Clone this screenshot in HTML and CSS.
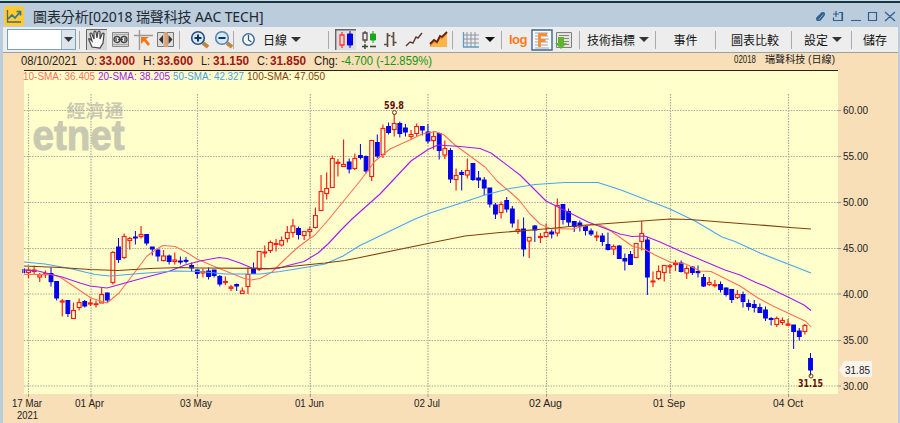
FILE: index.html
```
<!DOCTYPE html>
<html lang="zh-Hant">
<head>
<meta charset="utf-8">
<title>圖表分析</title>
<link rel="stylesheet" href="styles.css">
</head>
<body>
<div class="window">
  <header class="titlebar">
    <svg class="app-icon" width="20" height="20" viewBox="0 0 20 20"><rect width="20" height="20" rx="3" fill="#fdcb35"/><path d="M3.5 4v12H17" fill="none" stroke="#56666a" stroke-width="1.3"/><path d="M4 13l4-4 3 3 5-6M12.500 5.500H16.500V9.500" fill="none" stroke="#33758a" stroke-width="1.7"/></svg>
    <h1>圖表分析[02018 瑞聲科技 AAC TECH]</h1>
    <svg class="window-controls" width="84" height="16" viewBox="812 8 84 16"><g fill="none" stroke="#2d608e" stroke-width="1.2"><path d="M818 18l4-5q3-1 2 2l-4 5q-4 1-3-2l4-4M818 19l5-6" stroke-width="1.6"/><path d="M839 12.500h3.500v8h-9v-3M836 11v6M833 14h6M842 12.500v8"/><path d="M851 20.500h10M868.500 12.500h8v8h-8zM885 12l10 9M895 12l-10 9"/></g></svg>
  </header>

  <nav class="toolbar">
    <div class="section symbol"><div class="combo"><i></i><b><svg width="12" height="8" viewBox="0 0 12 8"><path d="M1 1h9L5.500 6z" fill="#333"/></svg></b></div></div>
    <div class="section cursor-tools">
      <svg viewBox="0 0 22 22"><path d="M0 0h21v21H0z" fill="#d7d7d7"/><path d="M.5 21V.5H21" fill="none" stroke="#666"/><path d="M6 18L3 11q-1-2 1-1l2 2-2-7q1-2 2 0l2 5V3q1-2 2 0l1 6 1-6q1-2 2 0v7l2-5q2-2 2 0l-1 9-3 5z" fill="#fafafa" stroke="#444" stroke-width="1.200"/></svg>
      <svg viewBox="0 0 22 22"><path d="M2.500 3.500h16v14h-16z" fill="#d8d8d8" stroke="#888"/><path d="M3 5.500h15M3 15.500h15" stroke="#aaa"/><g fill="#eee" stroke="#444" stroke-width="1.300"><circle cx="7" cy="10.500" r="3"/><circle cx="14" cy="10.500" r="3"/><path d="M8 10.500h5M6 9v3M15 9v3"/></g></svg>
      <svg viewBox="0 0 22 22"><path d="M1 6.500h19M6.500 1v20" stroke="#999" stroke-width="1.400"/><path d="M8 8h8l-3 2 4 5-2 2-4-5-3 3z" fill="#ff7410"/></svg>
      <svg viewBox="0 0 22 22"><path d="M2.500 3.500h16v14h-16z" fill="#ddd" stroke="#777"/><path d="M9.500 3h2.500v15h-2.500z" fill="#ff9a4a"/><path d="M8 6v9l-4-4.500zM13.500 6v9l4-4.500z" fill="#333"/><path d="M9 4v14M12.500 4v14" stroke="#aaa"/></svg>
    </div>
    <div class="section zoom-tools">
      <svg viewBox="0 0 22 22"><path d="M14 14l5 4" stroke="#c1853d" stroke-width="4"/><circle cx="9" cy="9" r="6.300" fill="#d3e9fa" stroke="#284f7d" stroke-width="1.600"/><path d="M5.500 9h7M9 5.500v7" stroke="#17345f" stroke-width="2"/></svg>
      <svg viewBox="0 0 22 22"><path d="M14 14l5 4" stroke="#c1853d" stroke-width="4"/><circle cx="9" cy="9" r="6.300" fill="#d3e9fa" stroke="#5484ad" stroke-width="1.600"/><path d="M5.500 9h7" stroke="#17345f" stroke-width="2"/></svg>
    </div>
    <div class="section period"><svg width="16" height="16" viewBox="0 0 16 16"><circle cx="7.500" cy="7.500" r="5.700" fill="#f8fbff" stroke="#3d6c9f" stroke-width="1.500"/><path d="M7.500 3v5l3 2" fill="none" stroke="#31577f" stroke-width="1.300"/></svg><span>日線</span><svg width="12" height="8" viewBox="0 0 12 8"><path d="M1 1h10L6 6z" fill="#333"/></svg></div>
    <div class="section styles-tools">
      <svg viewBox="0 0 22 22"><path d="M0 0h21v21H0z" fill="#dedede"/><path d="M.7 21V.7H21" fill="none" stroke="#666" stroke-width="1.400"/><path d="M7 3v3M7 16v3M5 6h4v10H5z" fill="none" stroke="#f33" stroke-width="1.300"/><path d="M15 2v17M12.500 5h5v11h-5z" fill="#00f" stroke="#00c"/></svg>
      <svg viewBox="0 0 22 22"><path d="M5 2v2M5 11v3M3 4h4v7H3z" fill="none" stroke="#554540" stroke-width="1.300"/><path d="M13 2v12M10.500 5h5v6h-5z" fill="#18a818" stroke="#18a818"/><path d="M2 17.500h6M5 15v5M10 17.500h6" stroke="#443" stroke-width="1.500"/></svg>
      <svg viewBox="0 0 22 22"><path d="M4.500 4v14M1 15.500h3M4.500 6.500h3M10.500 3v14M8 7.500h3M10.500 13.500h3" fill="none" stroke="#5f4c40" stroke-width="1.700"/></svg>
      <svg viewBox="0 0 22 22"><path d="M1 17l4-4 3 1 3-6 2 1 4-5" fill="none" stroke="#5f4038" stroke-width="1.500"/></svg>
      <svg viewBox="0 0 22 22"><path d="M1 18v-3l4-4 3 2 3-6 2 1 5-5v15z" fill="#ffb545"/><path d="M1 17l4-4 3 1.500 3-5.500 2 1 5-6" fill="none" stroke="#ff7a1b"/><path d="M1 15l4-4 3 2 3-6 2 1 5-5" fill="none" stroke="#61200b" stroke-width="1.800"/></svg>
    </div>
    <div class="section grid-tool"><svg width="18" height="18" viewBox="0 0 18 18"><path d="M1 4h16M1 8h16M1 12h16M5 1v15M9 1v15M13 1v15" stroke="#8b969f"/><path d="M1.500 1v15H17" fill="none" stroke="#5c9cc4" stroke-width="1.300"/></svg><svg width="12" height="8" viewBox="0 0 12 8"><path d="M1 1h10L6 6z" fill="#111"/></svg></div>
    <div class="section scale-tools">
      <strong>log</strong>
      <svg viewBox="0 0 22 22"><path d="M1 1h20v20H1z" fill="#fafafa" stroke="#3b6790" stroke-width="1.400"/><path d="M4 4h13M4 7h13M4 10h14M4 13h13M4 16h13M4 19h14" stroke="#9aa6b2"/><path d="M8.500 18V5.500h7.500M8.500 11.500h6" fill="none" stroke="#ff8c2e" stroke-width="2.800"/></svg>
      <svg viewBox="0 0 22 22"><path d="M3.500 3.500h15v15h-15z" fill="#e4e4df" stroke="#808080"/><path d="M6 6.500h10M6 9.500h10M6 12.500h10M6 15.500h10" stroke="#888"/><path d="M5 8h6v6h3l-6 6-6-6h3z" fill="#60b431"/></svg>
    </div>
    <div class="section indicators"><span>技術指標</span><svg width="12" height="8" viewBox="0 0 12 8"><path d="M1 1h10L6 6z" fill="#333"/></svg></div>
    <div class="section events">事件</div>
    <div class="section compare">圖表比較</div>
    <div class="section settings"><span>設定</span><svg width="12" height="8" viewBox="0 0 12 8"><path d="M1 1h10L6 6z" fill="#333"/></svg></div>
    <div class="section save">儲存</div>
  </nav>
  <main><svg id="chart" width="895" height="370" viewBox="3 53 895 370"></svg></main>
</div>
<script src="chart.js"></script>
</body>
</html>
```
FILE: styles.css
```
* { box-sizing: border-box; }
body { margin: 0; background: #bbccdd; font-family: "Liberation Sans", "Noto Sans CJK TC", sans-serif; overflow: hidden; }
.window { width: 900px; height: 423px; padding: 0 2px 0 3px; border-top: 1px solid #b4e4f0; background: #bbccdd; }
.titlebar { height: 26px; margin: 0 -2px 0 -3px; padding: 2px 4px 0 4px; display: flex; align-items: center; border-top: 2px solid #26323a; }
.app-icon { flex: none; margin-top: -1px; }
h1 { margin: 2px 0 0 9px; flex: 1; font: 14px/20px "Noto Sans", "Noto Sans CJK TC", sans-serif; letter-spacing: -.12px; color: #202830; white-space: nowrap; }
.window-controls { flex: none; }
.toolbar { height: 26px; display: flex; align-items: center; background: #ededed; border-bottom: 1px solid #9da1a4; font-size: 12px; color: #111; white-space: nowrap; }
.section { height: 18px; flex: none; display: flex; align-items: center; border-right: 1px solid #aaa; }
.section svg { flex: none; }
.symbol { width: 77px; padding-left: 4px; }
.combo { width: 69px; height: 21px; flex: none; display: flex; border: 1px solid #7ba0bd; background: #fff; }
.combo i { flex: 1; }
.combo b { width: 14px; display: flex; align-items: center; justify-content: center; background: #dce5ec; border-left: 1px solid #9bb5c8; }
.cursor-tools { width: 100px; padding-left: 6px; display: grid; grid-template-columns: 24px 23px 22px 22px; align-content: center; }
.cursor-tools svg, .zoom-tools svg, .styles-tools svg, .scale-tools svg { width: 22px; height: 22px; }
.zoom-tools { width: 54px; padding-left: 9px; gap: 2px; }
.period { width: 95px; padding-left: 7px; gap: 6px; }
.period span { margin-right: -3px; }
.styles-tools { width: 124px; padding-left: 6px; display: grid; grid-template-columns: 25px 23px 22px 24px 22px; align-content: center; }
.grid-tool { width: 49px; padding-left: 9px; gap: 4px; }
.scale-tools { width: 78px; padding-left: 7px; }
.scale-tools strong { width: 22px; color: #ff7818; font-size: 13px; letter-spacing: -.5px; }
.indicators { width: 76px; padding-left: 7px; gap: 3px; }
.events { width: 60px; justify-content: center; }
.compare { width: 76px; padding-left: 15px; }
.settings { width: 60px; padding-left: 12px; gap: 3px; }
.save { width: 46px; padding-left: 11px; border: 0; }
main { height: 370px; background: #f8dfb7; }
#chart { display: block; font-family: "Liberation Sans", "Noto Sans CJK TC", sans-serif; }
.plot { fill: #ffffcb; }
.grid { stroke: #aaa99f; stroke-width: 1.2; stroke-dasharray: 1.5 1.2; }
.tick { stroke: #999; }
.rule { stroke: #28221d; stroke-width: 1.2; }
.up { stroke: #f31d16; fill: #ffffcb; stroke-width: 1.15; }
.down { stroke: #0000df; fill: #0000fa; stroke-width: 1; }
.average { fill: none; stroke-width: 1.1; stroke-linejoin: round; }
.watermark { fill: #c9c9b2; font-weight: bold; }
.info { font-size: 12px; fill: #222; }
.value { font-weight: bold; fill: #9c1713; }
.change { fill: #149414; }
.legend { font-size: 10px; }
.axis { font-size: 10.5px; fill: #222; }
.extreme { font: bold 10px "DejaVu Sans", sans-serif; fill: #640d08; }
.marker { fill: none; stroke: #73322a; }
```
FILE: chart.js
```
const chart = document.getElementById("chart");
const NS = "http://www.w3.org/2000/svg";
function draw(tag, attrs, content) {
  const node = document.createElementNS(NS, tag);
  for (const key in attrs) node.setAttribute(key, attrs[key]);
  if (content) node.textContent = content;
  chart.appendChild(node);
}
function label(x, y, text, length, cls, extra = {}) {
  draw("text", {x, y, textLength: length, lengthAdjust: "spacingAndGlyphs", class: cls, ...extra}, text);
}
function line(x1, y1, x2, y2, cls) { draw("line", {x1, y1, x2, y2, class: cls}); }

draw("rect", {x: 24, y: 71, width: 814, height: 323, class: "plot"});
label(66.500, 117, "經濟通", 57, "watermark", {"font-size": 17});
label(32.500, 149.500, "etnet", 92, "watermark", {"font-size": 42, stroke: "#c9c9b2"});

const prices = [[110.500, "60.00"], [156.500, "55.00"], [202.500, "50.00"], [248.500, "45.00"], [294, "40.00"], [340.500, "35.00"], [386, "30.00"]];
for (const [y, text] of prices) {
  line(24, y, 838, y, "grid"); line(838, y, 841, y, "tick");
  label(843, y + 3.500, text, 25, "axis");
}
const dates = [[28.500, "17 Mar", 12, 30], [91, "01 Apr", 75, 29], [197.500, "03 May", 180, 32], [310.300, "01 Jun", 295, 29], [428, "02 Jul", 414, 26], [546.500, "02 Aug", 529, 33], [670.500, "01 Sep", 653, 32], [788.500, "04 Oct", 773, 30]];
for (const [x, text, tx, width] of dates) {
  line(x, 94, x, 394, "grid"); line(x, 394, x, 397, "tick"); label(tx, 407, text, width, "axis");
}
label(17, 419, "2021", 21, "axis");

// direction, body top, body bottom, high, low
const candles = `d 269 272.7 269 273
u 270 272.5 267.5 278
u 270 271.5 265.5 275
u 275 277 273 282
u 273.7 274.7 270.5 278
d 273.5 281.7 267.5 286.5
d 281.5 298 281 300.5
u 301 302 299 316.5
d 300.5 313.5 300 317
u 310.5 318.5 302.5 318.5
u 302.5 307.5 298.5 310.5
d 301.5 306 300 307.5
u 303 304 298.5 306
u 303.8 304.6 300.5 307.5
u 294.5 303 287.5 303
d 293 300 292.5 303
u 252.5 282.5 251 284.5
d 247 259.5 238 263
u 236.5 257.5 233.5 259
u 238.5 240.5 237 249.5
d 237 238 231 244.5
u 234.5 236.5 226 238.5
d 234.5 243 234 245.5
d 247 249 247 255.5
d 250 256 249 261.5
u 256 260.5 250 261.5
d 256 261.5 254.5 264.5
u 260 261.5 252.5 264.5
d 261 262 256.5 264.5
d 260.3 261.3 257 263.5
d 265.5 268 262.5 272
d 270 273.5 269.5 278.5
u 271.5 273 268.5 277.5
d 271 276.5 267.5 279.5
d 270 275.5 270 277.5
d 276.5 284 275 286.5
u 281.5 282.5 276.5 285
u 287 288.3 285 291
d 284.5 286 283.5 291
u 291 293.5 287.5 293.5
u 274.5 286.5 267.5 294
d 269 273.5 262.5 273.5
u 251.5 269.5 251 271
u 252 253 245.5 257.5
u 242.5 250.5 240.5 253
u 243.5 244.5 239 251.5
u 240.5 245 236.5 246.5
u 232.5 238.5 226 242.5
u 226 232.5 219 237.5
d 228.5 234.5 226.5 239.5
u 231.5 235.5 231.5 240
u 229.5 231.5 226.5 237.5
u 215.5 227.5 207.5 228.5
u 191.5 210.5 175 211
u 188.5 193.5 172.5 199.5
u 158.5 187.5 155.5 188
u 162.3 163.3 159 176.5
u 164.5 166.5 139.5 167
d 162 169 158.5 173.5
u 158.5 168.5 153.5 170
d 155.5 157.5 144 159.5
d 156.5 171 155.5 173.5
u 140.5 176.5 140.5 181
d 142.5 156 134.5 158
u 128.5 154.5 124.5 158
d 126.5 132.5 122.5 134.5
u 123.5 129.5 114 136.5
d 123.5 133.5 121.5 137.5
d 128 132 124 136.5
u 134.5 136.5 130 139.5
u 126.5 133.5 123.5 136.5
d 126.5 130 126 135.5
d 132 141 124 143.5
u 136.5 140.5 131.5 149.5
d 133.5 150.5 132.5 159.5
u 148.5 155 140.5 159
d 150.5 179 148 183
u 175.5 179.5 168.5 190.5
d 172.5 174.5 170 190.5
u 170.5 175 158.5 178.5
d 163.5 179.5 163.5 181
d 178 180 171 188
d 180 188 177 195
d 188 204 188 207.5
d 205 214 203 219
u 204.5 212.5 201.5 218.5
d 200.5 209 197 212.5
d 209 223 206 227.5
u 229.5 231.5 219.5 234
d 229 249 217.5 256.5
u 237.5 241 237.5 258
d 226 230 225 242
u 236.5 237.5 233 243
u 232.5 236.5 223.5 236.5
d 232 234 229.5 238.5
u 205.5 233 198.5 236.5
d 204.5 219.5 204 224.5
d 211.5 222 208.5 226.5
d 221.5 226.5 221 232
d 223 226 220.5 231.5
d 226.5 230.5 225 235.5
d 231 234 228.5 236
u 236 237 231.5 241
d 236 241.5 233 246
d 244.5 249.5 232.5 250.5
u 246.5 249 244.5 255
d 246 258.5 245 259
d 258.5 261 253.5 270.5
d 254.5 264.5 251 265
u 243.5 257.5 243 258
u 233.5 241.5 221 250.5
d 240 277 237 295
u 281 282 271.5 287
u 271.5 278.5 265.5 280
u 265.5 272.5 265 281.5
u 265.8 266.8 264 273.5
u 263.5 264.5 260 271
d 263 271.5 260.5 272.5
u 268.5 273 265.5 279
d 267 272.5 266 275
d 271.5 272.7 265.5 277.5
d 277.5 286 274 287
u 282.5 284.5 277 286
u 284.7 285.7 280 287.5
d 284.5 289.5 281.5 292.5
d 288 294.5 287.5 296.5
d 289.5 299.5 289 303
u 294.5 297.5 290 299
d 294.5 301.5 291.5 307.5
d 303.5 306.5 299.5 310.5
d 304.5 307.5 300 312.5
d 307.5 312.5 303.5 313
d 310 318 306.5 321
d 318.5 319.5 317 325.5
u 318.5 324.5 316.5 327
u 320.5 322.5 317.5 325
u 324 325.2 319 326
d 325 331.5 325 349
d 331 336.5 328 340.5
u 325.5 331.5 324 334.5
d 358.5 370 353 375.5`.split("\n");
candles.forEach((row, index) => {
  const [kind, ...values] = row.split(" ");
  const [top, bottom, high, low] = values.map(Number);
  const x = 28.5 + (index - 1) * 5.626;
  const cls = kind === "u" ? "up" : "down";
  const left = Math.max(24.5, x - 1.9);
  line(x, high, x, low, cls);
  draw("rect", {x: left, y: top, width: x + 1.9 - left, height: Math.max(.5, bottom - top), class: cls});
});

const averages = [
  ["#ff7058", "24,274.5 51,274.5 60,277 91,298 107,303 119,293 135,272 147,256 157,249 163,245.5 175,246.5 186,252 197,259 218,268 243,278 251,280 260,278.5 272,272 281,263 297,248 309,239 315,235 329,219 342,203 360,181 375,161 390,149 412,139 422,134 435,131.5 444,135 455,145 470,156 485,167 497,181 510,192 519,200 530,214 540,224 550,228.5 572,229 590,225 600,225 608,229 618,236 632,246 645,249.5 655,255 670,262 684,263.5 690,266 700,271 711,271.5 722,277 740,286 758,298 772,305.5 790,314 806,321.5 811,327"],
  ["#a11cf0", "24,270 38,271 62,277 80,283 90,286 107,288 125,283 145,277.5 170,271 185,265 200,261 219,257.5 227,258.5 240,263 252,268 265,269 278,268.5 288,265.5 304,261.5 318,253 328,244 342,229 352,219 380,194 411,161 428,149.5 438,145 460,146.5 480,148.5 491,153 520,175 546,201 560,208 588,222 620,234 632,236.5 645,236 660,242 680,251 700,259.5 725,270 740,275 757,283 765,286 790,298 804,305 811,310.5"],
  ["#4aa4f2", "24,262 45,264 70,268.5 95,274.5 110,276 140,273.5 175,271 200,271.5 225,274 260,274 280,271.5 305,267.5 325,264 343,256 360,245.5 415,219 430,213 455,205 485,195 510,188.5 535,184.5 565,182.5 598,182.5 621,190 670,209 695,221 722,237 735,241.5 760,253 788,264 811,273"],
  ["#80400d", "24,266 60,267.5 90,269.5 118,270.5 150,268.5 180,267.5 200,268 270,268.5 300,265.5 325,263 345,260.5 360,257.5 440,241 465,236 500,232.5 550,228.5 580,225.5 615,223 635,221.5 670,219 690,219.5 740,223.5 760,225 790,227.5 811,229"]
];
for (const [stroke, points] of averages) draw("polyline", {points, stroke, class: "average"});

line(24, 70.5, 838, 70.5, "rule");
for (const item of [[21, "08/10/2021", 56, ""], [86, "O:", 11, ""], [99, "33.000", 36, "value"], [143, "H:", 12, ""], [157, "33.600", 36, "value"], [201, "L:", 9, ""], [213, "31.150", 36, "value"], [257, "C:", 11, ""], [270, "31.850", 36, "value"], [314, "Chg:", 24, ""], [341, "-4.700 (-12.859%)", 91, "change"]]) label(item[0], 65, item[1], item[2], "info " + item[3]);
label(734, 63, "02018", 22, "axis");
label(765, 63, "瑞聲科技 (日線)", 70, "axis");
for (const item of [[23, "10-SMA: 36.405", 72, "#ff7058"], [98, "20-SMA: 38.205", 72, "#9d20e8"], [173, "50-SMA: 42.327", 71, "#4a9de5"], [247, "100-SMA: 47.050", 78, "#80400d"]]) label(item[0], 80, item[1], item[2], "legend", {fill: item[3]});
draw("circle", {cx: 394.5, cy: 112.5, r: 2, class: "marker"});
draw("circle", {cx: 811, cy: 376, r: 2, class: "marker"});
label(384, 109, "59.8", 20, "extreme");
label(798, 386.5, "31.15", 25, "extreme");
draw("path", {d: "M839 370l5-9h28v16h-28z", fill: "#fbf4ed"});
label(845, 374, "31.85", 25, "axis");
```
